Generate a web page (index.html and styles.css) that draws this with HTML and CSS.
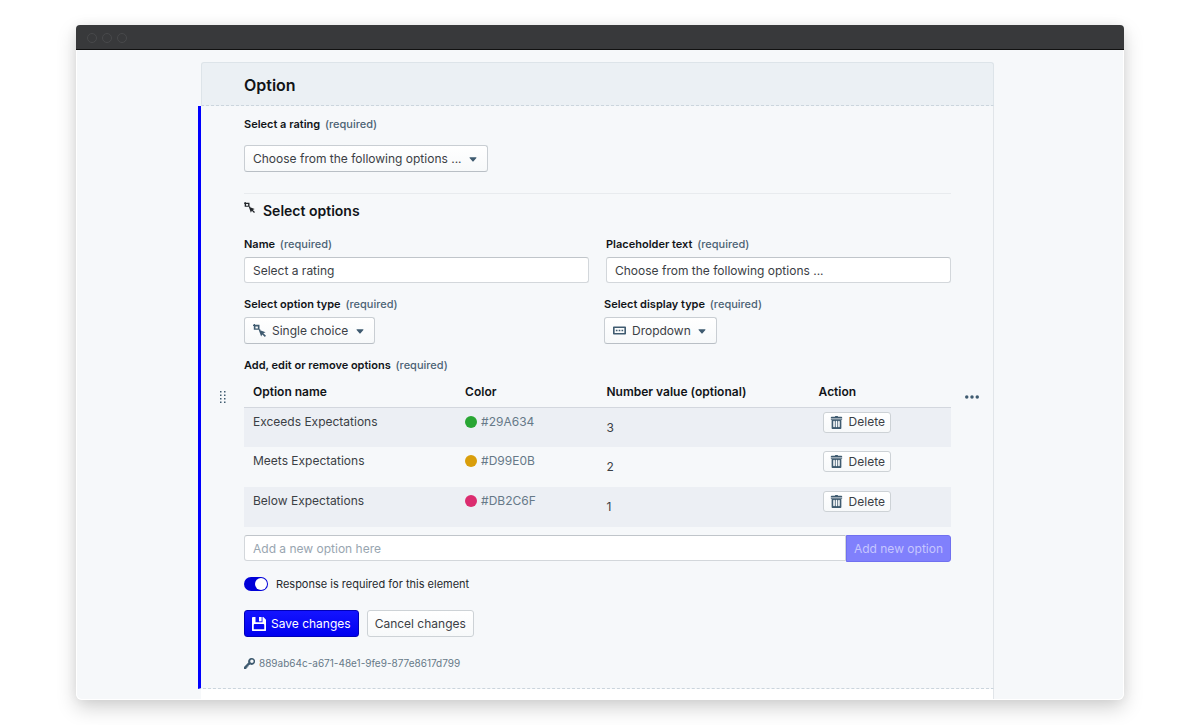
FILE: index.html
```html
<!DOCTYPE html>
<html lang="en">
<head>
<meta charset="utf-8">
<title>Option</title>
<link rel="stylesheet" href="styles.css">
</head>
<body>
<svg class="sprite" aria-hidden="true">
  <symbol id="i-caret" viewBox="0 0 16 16"><path d="M12 6.500c0-.28-.22-.5-.5-.5h-7a.495.495 0 00-.37.83l3.500 4c.09.1.22.17.37.17s.28-.07.37-.17l3.500-4c.08-.09.13-.2.13-.33z"/></symbol>
  <symbol id="i-trash" viewBox="0 0 16 16"><path fill-rule="evenodd" d="M14.490 3.990h-13c-.28 0-.5.22-.5.5s.22.5.5.5h.5v10c0 .55.45 1 1 1h10c.55 0 1-.45 1-1v-10h.5c.28 0 .5-.22.5-.5s-.22-.5-.5-.5zm-8.500 9c0 .55-.45 1-1 1s-1-.45-1-1v-6c0-.55.45-1 1-1s1 .45 1 1v6zm3 0c0 .55-.45 1-1 1s-1-.45-1-1v-6c0-.55.45-1 1-1s1 .45 1 1v6zm3 0c0 .55-.45 1-1 1s-1-.45-1-1v-6c0-.55.45-1 1-1s1 .45 1 1v6zm2-12h-4c0-.55-.45-1-1-1h-2c-.55 0-1 .45-1 1h-4c-.55 0-1 .45-1 1v1h14v-1c0-.55-.45-1-1-1z"/></symbol>
  <symbol id="i-select" viewBox="0 0 16 16"><path fill-rule="evenodd" d="M1 0h1.500v1H8v5.500h1V8H7.500V7H1V2.500H0V1h1zM3 3v2.500h3V3z"/><path d="M7 7l8.500 3.200-2.800 1.300 3.300 3.100-1.400 1.400-3.200-3.200L10 15.500z"/></symbol>
  <symbol id="i-field" viewBox="0 0 16 16"><path fill-rule="evenodd" d="M1 3h14c.6 0 1 .4 1 1v8c0 .6-.4 1-1 1H1c-.6 0-1-.4-1-1V4c0-.6.4-1 1-1zm1 2v6h12V5z"/><path d="M3.500 7h2v2h-2zM7 7h2v2H7zM10.500 7h2v2h-2z"/></symbol>
  <symbol id="i-save" viewBox="0 0 16 16"><path fill-rule="evenodd" d="M1 0h3v6h8V0h1l3 3v12c0 .6-.4 1-1 1H1c-.6 0-1-.4-1-1V1c0-.6.4-1 1-1zm1 9v5h12V9c0-.6-.4-1-1-1H3c-.6 0-1 .4-1 1z"/><path d="M8 0h3v5H8z"/></symbol>
  <symbol id="i-key" viewBox="0 0 16 16"><path fill-rule="evenodd" d="M11 0a5 5 0 00-4.700 6.700L0 13v3h3.500v-2H5v-1.500h1.500V11L9 9.500A5 5 0 1011 0zm.5 2.200a2.500 2.500 0 110 5 2.500 2.500 0 010-5z"/></symbol>
  <symbol id="i-more" viewBox="0 0 16 16"><circle cx="2" cy="8" r="2"/><circle cx="8" cy="8" r="2"/><circle cx="14" cy="8" r="2"/></symbol>
  <symbol id="i-drag" viewBox="0 0 8 14"><path d="M1 1h1.500v1.500H1zM5 1h1.500v1.500H5zM1 4.500h1.500V6H1zM5 4.500h1.500V6H5zM1 8h1.500v1.500H1zM5 8h1.500v1.500H5zM1 11.500h1.500V13H1zM5 11.500h1.500V13H5z"/></symbol>
</svg>

<main class="window">
  <div class="titlebar"><span class="dot"></span><span class="dot"></span><span class="dot"></span></div>
  <div class="page">
    <section class="card">
      <header class="card-header"><h1>Option</h1></header>
      <form class="element">
        <button class="handle" type="button" aria-label="Move element"><svg class="drag"><use href="#i-drag"/></svg></button>
        <div class="content">
          <label class="label" for="rating">Select a rating <span class="req">(required)</span></label>
          <div class="select select-rating">
            <select id="rating"><option>Choose from the following options ...</option></select>
            <svg class="caret"><use href="#i-caret"/></svg>
          </div>

          <h2 class="section-title"><svg class="icon-small"><use href="#i-select"/></svg>Select options</h2>

          <div class="fields">
            <div>
              <label class="label" for="name">Name <span class="req">(required)</span></label>
              <input class="input" id="name" type="text" value="Select a rating">
            </div>
            <div>
              <label class="label" for="placeholder">Placeholder text <span class="req">(required)</span></label>
              <input class="input" id="placeholder" type="text" value="Choose from the following options ...">
            </div>
          </div>

          <div class="types">
            <div>
              <label class="label" for="option-type">Select option type <span class="req">(required)</span></label>
              <div class="select with-icon">
                <svg class="lead"><use href="#i-select"/></svg>
                <select id="option-type"><option>Single choice</option></select>
                <svg class="caret"><use href="#i-caret"/></svg>
              </div>
            </div>
            <div>
              <label class="label" for="display-type">Select display type <span class="req">(required)</span></label>
              <div class="select with-icon">
                <svg class="lead"><use href="#i-field"/></svg>
                <select id="display-type"><option>Dropdown</option></select>
                <svg class="caret"><use href="#i-caret"/></svg>
              </div>
            </div>
          </div>

          <label class="label" for="new-option">Add, edit or remove options <span class="req">(required)</span></label>
          <table class="options">
            <thead><tr><th class="wide">Option name</th><th>Color</th><th class="wide">Number value (optional)</th><th>Action</th></tr></thead>
            <tbody>
              <tr><td>Exceeds Expectations</td><td><span class="color"><span class="swatch green"></span>#29A634</span></td><td class="number">3</td><td class="action"><button class="button small" type="button"><svg class="trash"><use href="#i-trash"/></svg>Delete</button></td></tr>
              <tr><td>Meets Expectations</td><td><span class="color"><span class="swatch gold"></span>#D99E0B</span></td><td class="number">2</td><td class="action"><button class="button small" type="button"><svg class="trash"><use href="#i-trash"/></svg>Delete</button></td></tr>
              <tr><td>Below Expectations</td><td><span class="color"><span class="swatch rose"></span>#DB2C6F</span></td><td class="number">1</td><td class="action"><button class="button small" type="button"><svg class="trash"><use href="#i-trash"/></svg>Delete</button></td></tr>
            </tbody>
          </table>

          <div class="add-row">
            <input class="input" id="new-option" type="text" placeholder="Add a new option here">
            <button class="button add" type="button" disabled>Add new option</button>
          </div>

          <label class="toggle"><input type="checkbox" checked>Response is required for this element</label>

          <div class="actions">
            <button class="button primary" type="button"><svg class="save"><use href="#i-save"/></svg>Save changes</button>
            <button class="button" type="button">Cancel changes</button>
          </div>

          <div class="key"><svg class="icon-small"><use href="#i-key"/></svg>889ab64c-a671-48e1-9fe9-877e8617d799</div>
        </div>
        <button class="handle" type="button" aria-label="More"><svg class="more"><use href="#i-more"/></svg></button>
      </form>
      <div class="card-end"></div>
    </section>
  </div>
</main>
</body>
</html>
```
FILE: styles.css
```css
* { box-sizing: border-box; }
body {
  margin: 0;
  padding: 25px 76px;
  background: #fff;
  color: #3b4045;
  font: 12px/16px Inter, "Liberation Sans", sans-serif;
}
.sprite { display: none; }
svg { flex: none; fill: #3f5b70; display: block; }
button, input, select { font: inherit; color: inherit; margin: 0; }
button { cursor: pointer; }

.window {
  border-radius: 4px 4px 6px 6px;
  background: #f6f8fa;
  box-shadow: 0 8px 20px rgba(0, 0, 0, .18), 0 0 12px rgba(0, 0, 0, .05);
}
.titlebar {
  display: flex;
  align-items: center;
  gap: 5px;
  height: 25px;
  padding: 2px 0 0 11px;
  border-bottom: 1px solid #111;
  border-radius: 4px 4px 0 0;
  background: #38393b;
}
.dot { width: 10px; height: 10px; border: 1px solid #48494b; border-radius: 50%; }
.page {
  padding: 12px 129px 0 121px;
  border: solid #fff;
  border-width: 0 1px 1px;
  border-radius: 0 0 6px 6px;
}

.card-header {
  margin-left: 3px;
  padding: 12px 42px 10px;
  border: 1px solid #dde4e9;
  border-bottom: 1px dashed #cbd5dd;
  border-radius: 3px 3px 0 0;
  background: #ebf0f4;
}
h1 { margin: 0; color: #111418; font-size: 16px; line-height: 20px; font-weight: 600; }
.element {
  display: grid;
  grid-template-columns: 43px 1fr 42px;
  border-left: 3px solid #0000ff;
  border-right: 1px solid #e1e5e9;
  border-bottom: 1px dashed #cbd5dd;
  background: #f6f8fa;
}
.content { padding: 10px 0 17px; }
.card-end { height: 10px; margin-left: 3px; border-right: 1px solid #e1e5e9; background: #fff; }
.handle {
  display: grid;
  place-items: center;
  padding: 0;
  border: 0;
  background: none;
}
.drag { width: 8px; height: 14px; }
.more { width: 14px; height: 14px; }

.label { display: block; color: #111418; font-size: 11px; font-weight: 600; }
.req { margin-left: 2px; color: #4c6375; font-weight: 500; }

.select { position: relative; width: fit-content; margin-top: 5px; }
.select select {
  display: block;
  height: 27px;
  padding: 0 25px 0 8px;
  appearance: none;
  border: 1px solid #c9ced3;
  border-bottom-color: #b9bfc5;
  border-radius: 3px;
  background: linear-gradient(#fff, #f7f9fa);
}
.select.select-rating { margin-top: 13px; }
.select.with-icon select { padding-left: 27px; }
.caret { position: absolute; right: 8px; top: 7px; width: 14px; height: 14px; pointer-events: none; }
.lead { position: absolute; left: 9px; top: 7px; width: 13px; height: 13px; pointer-events: none; }

.section-title {
  display: flex;
  gap: 8px;
  margin: 21px 0 0;
  padding: 8px 0 16px;
  border-top: 1px solid #e8ebee;
  color: #111418;
  font-size: 14px;
  line-height: 18px;
  font-weight: 600;
}
.icon-small { width: 11px; height: 11px; }
.section-title .icon-small { fill: #202428; }

.input {
  display: block;
  width: 100%;
  height: 26px;
  padding: 0 8px;
  border: 1px solid #d3d7db;
  border-top-color: #c0c5ca;
  border-radius: 3px;
  background: #fff;
}
.input::placeholder { color: #98a5b0; opacity: 1; }
.fields, .types { display: grid; grid-template-columns: 1fr 1fr; }
.fields { gap: 17px; }
.fields .input { margin-top: 5px; }
.types { gap: 13px; margin: 13px 0; }

.options { width: 100%; table-layout: fixed; border-collapse: collapse; margin-top: 3px; }
.options th {
  width: 20%;
  height: 31px;
  padding: 2px 9px 0;
  border-bottom: 1px solid #d3d7de;
  color: #111418;
  font-weight: 600;
  text-align: left;
}
.options th.wide { width: 30%; }
.options td { height: 40px; padding: 6px 9px 0; vertical-align: top; }
.options td.number { padding-top: 12px; }
.options td.action { padding: 4px 13px 0; }
.options tbody tr:nth-child(odd) { background: #eceff4; }
.color { display: flex; align-items: center; gap: 4px; color: #667988; }
.swatch { width: 12px; height: 12px; border-radius: 50%; }
.green { background: #29a634; }
.gold { background: #d99e0b; }
.rose { background: #db2c6f; }

.button {
  display: flex;
  align-items: center;
  gap: 6px;
  height: 27px;
  padding: 0 7px;
  border: 1px solid #cdd2d6;
  border-radius: 3px;
  background: linear-gradient(#fff, #f7f9fa);
  white-space: nowrap;
}
.button.small { height: 21px; padding: 0 5px 0 6px; }
.trash { width: 13px; height: 13px; }
.button.primary { border-color: #0000b8; background: linear-gradient(#1414ff, #0000f0); color: #fff; gap: 5px; }
.save { width: 14px; height: 14px; fill: #fff; }
.add-row { display: flex; margin-top: 8px; }
.add-row .input { flex: 1; border-radius: 3px 0 0 3px; }
.button.add { border-color: #7070f0; border-radius: 0 3px 3px 0; background: #8080fc; color: #c6c6fe; }

.toggle { display: flex; align-items: center; gap: 8px; width: fit-content; margin-top: 14px; font-size: 11px; color: #25292d; }
.toggle input {
  display: flex;
  justify-content: flex-end;
  width: 24px;
  height: 14px;
  padding: 1px;
  appearance: none;
  border-radius: 7px;
  background: #0000d8;
}
.toggle input::before { content: ""; width: 12px; height: 12px; border-radius: 50%; background: #fff; }
.actions { display: flex; gap: 8px; margin-top: 18px; }
.key { display: flex; align-items: center; gap: 4px; margin-top: 18px; color: #667988; font-size: 10px; }
```
